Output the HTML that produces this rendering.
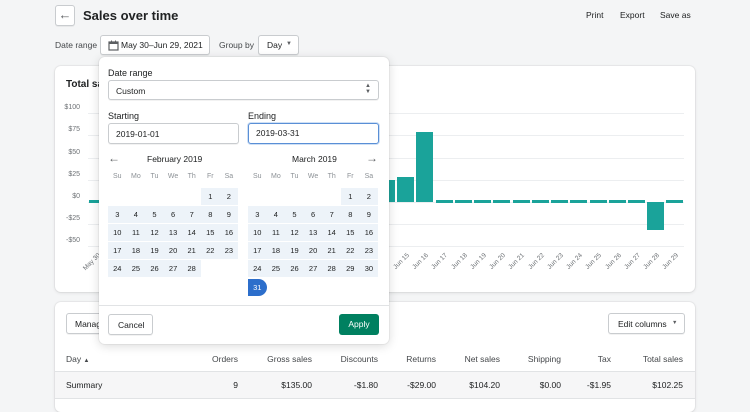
<!DOCTYPE html>
<html><head><meta charset="utf-8"><style>
*{box-sizing:border-box;margin:0;padding:0}
body{width:750px;height:400px;overflow:hidden;background:#f4f5f6;font-family:"Liberation Sans",sans-serif;color:#202223;position:relative;font-size:9px}
.a{position:absolute}
.btn{position:absolute;background:#fff;border:1px solid #c9cccf;border-radius:3px;box-shadow:0 1px 0 rgba(0,0,0,.05)}
.card{position:absolute;background:#fff;border-radius:6px;box-shadow:0 0 0 1px rgba(63,63,68,.05),0 1px 3px rgba(63,63,68,.12)}
.grid{position:absolute;left:88px;width:596px;height:1px;background:#eceef0}
.yl{position:absolute;width:28px;text-align:right;font-size:7px;color:#6d7175;left:52px}
.bar{position:absolute;background:#1aa39a;width:17px}
.xl{position:absolute;font-size:6.5px;color:#6d7175;transform:rotate(-45deg);transform-origin:right top;white-space:nowrap;text-align:right;width:30px}
.cell{position:absolute;width:18.6px;height:17px;background:#edf3f9;text-align:center;line-height:17px;color:#202223;font-size:7.5px}
.dn{position:absolute;width:18.6px;text-align:center;color:#8c9196;font-size:7px}
.th{position:absolute;top:354px;font-size:8.5px;color:#44474a;text-align:right}
.td{position:absolute;top:380px;font-size:8.5px;text-align:right}
</style></head><body>
<div class="btn" style="left:55px;top:5px;width:20px;height:21px;text-align:center;line-height:18px;font-size:13px;color:#5c5f62">&#8592;</div>
<div class="a" style="left:83px;top:8px;font-size:13px;font-weight:bold">Sales over time</div>
<div class="a" style="left:586px;top:10px;font-size:8.5px">Print</div>
<div class="a" style="left:620px;top:10px;font-size:8.5px">Export</div>
<div class="a" style="left:660px;top:10px;font-size:8.5px">Save as</div>
<div class="a" style="left:55px;top:40px;color:#44474a;font-size:8.5px">Date range</div>
<div class="btn" style="left:100px;top:35px;width:110px;height:20px"><svg class="a" style="left:7px;top:4px" width="11" height="11" viewBox="0 0 11 11"><rect x="1" y="2" width="9" height="8" fill="none" stroke="#5c5f62" stroke-width="1.2"/><rect x="1" y="2" width="9" height="2" fill="#5c5f62"/><rect x="3" y="0.5" width="1" height="2" fill="#5c5f62"/><rect x="7" y="0.5" width="1" height="2" fill="#5c5f62"/></svg><span class="a" style="left:20px;top:4px;font-size:8.5px">May 30–Jun 29, 2021</span></div>
<div class="a" style="left:219px;top:40px;color:#44474a;font-size:8.5px">Group by</div>
<div class="btn" style="left:258px;top:35px;width:41px;height:20px"><span class="a" style="left:8px;top:4px;font-size:8.5px">Day</span><span class="a" style="left:27px;top:5px;font-size:6px;color:#5c5f62">&#9660;</span></div>

<div class="card" style="left:55px;top:66px;width:640px;height:226px"></div>
<div class="a" style="left:66px;top:79px;font-size:10px;font-weight:bold">Total sales</div>
<div class="grid" style="top:113px"></div><div class="grid" style="top:135px"></div><div class="grid" style="top:158px"></div><div class="grid" style="top:180px"></div><div class="grid" style="top:202px"></div><div class="grid" style="top:224px"></div><div class="grid" style="top:246px"></div>
<div class="yl" style="top:104px">$100</div><div class="yl" style="top:126px">$75</div><div class="yl" style="top:149px">$50</div><div class="yl" style="top:171px">$25</div><div class="yl" style="top:193px">$0</div><div class="yl" style="top:215px">-$25</div><div class="yl" style="top:237px">-$50</div>
<div class="bar" style="left:89px;top:200px;height:3px"></div>
<div class="bar" style="left:378px;top:180px;height:22px"></div>
<div class="bar" style="left:397px;top:177px;height:25px"></div>
<div class="bar" style="left:416px;top:132px;height:70px"></div>
<div class="bar" style="left:436px;top:200px;height:3px"></div>
<div class="bar" style="left:455px;top:200px;height:3px"></div>
<div class="bar" style="left:474px;top:200px;height:3px"></div>
<div class="bar" style="left:493px;top:200px;height:3px"></div>
<div class="bar" style="left:513px;top:200px;height:3px"></div>
<div class="bar" style="left:532px;top:200px;height:3px"></div>
<div class="bar" style="left:551px;top:200px;height:3px"></div>
<div class="bar" style="left:570px;top:200px;height:3px"></div>
<div class="bar" style="left:590px;top:200px;height:3px"></div>
<div class="bar" style="left:609px;top:200px;height:3px"></div>
<div class="bar" style="left:628px;top:200px;height:3px"></div>
<div class="bar" style="left:647px;top:202px;height:28px"></div>
<div class="bar" style="left:666px;top:200px;height:3px"></div>
<div class="xl" style="left:67px;top:252px">May 30</div>
<div class="xl" style="left:376px;top:252px">Jun 15</div>
<div class="xl" style="left:395px;top:252px">Jun 16</div>
<div class="xl" style="left:414px;top:252px">Jun 17</div>
<div class="xl" style="left:434px;top:252px">Jun 18</div>
<div class="xl" style="left:453px;top:252px">Jun 19</div>
<div class="xl" style="left:472px;top:252px">Jun 20</div>
<div class="xl" style="left:491px;top:252px">Jun 21</div>
<div class="xl" style="left:511px;top:252px">Jun 22</div>
<div class="xl" style="left:530px;top:252px">Jun 23</div>
<div class="xl" style="left:549px;top:252px">Jun 24</div>
<div class="xl" style="left:568px;top:252px">Jun 25</div>
<div class="xl" style="left:588px;top:252px">Jun 26</div>
<div class="xl" style="left:607px;top:252px">Jun 27</div>
<div class="xl" style="left:626px;top:252px">Jun 28</div>
<div class="xl" style="left:645px;top:252px">Jun 29</div>

<div class="card" style="left:55px;top:302px;width:640px;height:110px"></div>
<div class="btn" style="left:66px;top:313px;width:50px;height:21px"><span class="a" style="left:8px;top:5px;font-size:8.5px">Manage</span></div>
<div class="btn" style="left:608px;top:313px;width:77px;height:21px"><span class="a" style="left:9px;top:5px;font-size:8.5px">Edit columns</span><span class="a" style="left:63px;top:6px;font-size:5.5px;color:#5c5f62">&#9660;</span></div>
<div class="a" style="left:55px;top:371px;width:640px;height:1px;background:#e1e3e5"></div>
<div class="a" style="left:55px;top:372px;width:640px;height:26px;background:#f6f6f7"></div>
<div class="a" style="left:55px;top:398px;width:640px;height:1px;background:#e1e3e5"></div>
<div class="th" style="left:66px;text-align:left">Day <span style="font-size:6px">&#9650;</span></div>
<div class="th" style="right:512px">Orders</div><div class="th" style="right:438px">Gross sales</div><div class="th" style="right:372px">Discounts</div><div class="th" style="right:314px">Returns</div><div class="th" style="right:250px">Net sales</div><div class="th" style="right:189px">Shipping</div><div class="th" style="right:139px">Tax</div><div class="th" style="right:67px">Total sales</div>
<div class="td" style="left:66px;text-align:left">Summary</div>
<div class="td" style="right:512px">9</div><div class="td" style="right:438px">$135.00</div><div class="td" style="right:372px">-$1.80</div><div class="td" style="right:314px">-$29.00</div><div class="td" style="right:250px">$104.20</div><div class="td" style="right:189px">$0.00</div><div class="td" style="right:139px">-$1.95</div><div class="td" style="right:67px">$102.25</div>

<div class="a" style="left:99px;top:57px;width:290px;height:287px;background:#fff;border-radius:6px;box-shadow:0 0 0 1px rgba(63,63,68,.06),0 2px 10px rgba(0,0,0,.15)">
<div class="a" style="left:9px;top:11px">Date range</div>
<div class="btn" style="left:9px;top:23px;width:271px;height:20px"><span class="a" style="left:7px;top:5px;font-size:8.5px">Custom</span><span class="a" style="right:7px;top:2px;font-size:6px;color:#5c5f62;line-height:6px">&#9650;<br>&#9660;</span></div>
<div class="a" style="left:9px;top:54px">Starting</div>
<div class="a" style="left:149px;top:54px">Ending</div>
<div class="btn" style="left:9px;top:66px;width:131px;height:21px"><span class="a" style="left:7px;top:5px;font-size:8.5px">2019-01-01</span></div>
<div class="btn" style="left:149px;top:66px;width:131px;height:21px;border:1.5px solid #5a8fd6;box-shadow:0 0 0 1px #cfe0f5"><span class="a" style="left:7px;top:4px;font-size:8.5px">2019-03-31</span></div>
<div class="a" style="left:9px;top:94px;font-size:12px;color:#5c5f62">&#8592;</div>
<div class="a" style="left:267px;top:94px;font-size:12px;color:#5c5f62">&#8594;</div>
<div class="a" style="left:48px;top:97px;font-size:8.5px">February 2019</div>
<div class="a" style="left:193px;top:97px;font-size:8.5px">March 2019</div>
<div id="cals"></div>
<div class="a" style="left:0;top:248px;width:290px;height:1px;background:#e1e3e5"></div>
<div class="btn" style="left:9px;top:257px;width:45px;height:21px"><span class="a" style="left:9px;top:5px;font-size:8.5px">Cancel</span></div>
<div class="a" style="left:240px;top:257px;width:40px;height:21px;background:#008060;border-radius:3px;color:#fff;font-size:8.5px;text-align:center;line-height:21px">Apply</div>
</div>
<script>
(function(){
var c=document.getElementById('cals'),h='',d=['Su','Mo','Tu','We','Th','Fr','Sa'];
function m(x0,start,n){
 for(var i=0;i<7;i++)h+='<div class="dn" style="left:'+(x0+i*18.6)+'px;top:116px">'+d[i]+'</div>';
 for(var k=1;k<=n;k++){var p=start+k-1,r=Math.floor(p/7),col=p%7,l=x0+col*18.6,t=131+r*18;
  if(k==31&&n==31){h+='<div class="cell" style="left:'+l+'px;top:'+(t+1)+'px;background:#2c6ecb;color:#fff;border-radius:0 9px 9px 0">31</div>';}
  else h+='<div class="cell" style="left:'+l+'px;top:'+t+'px">'+k+'</div>';}
}
m(9,5,28);m(149,5,31);c.innerHTML=h;
})();
</script>
</body></html>
